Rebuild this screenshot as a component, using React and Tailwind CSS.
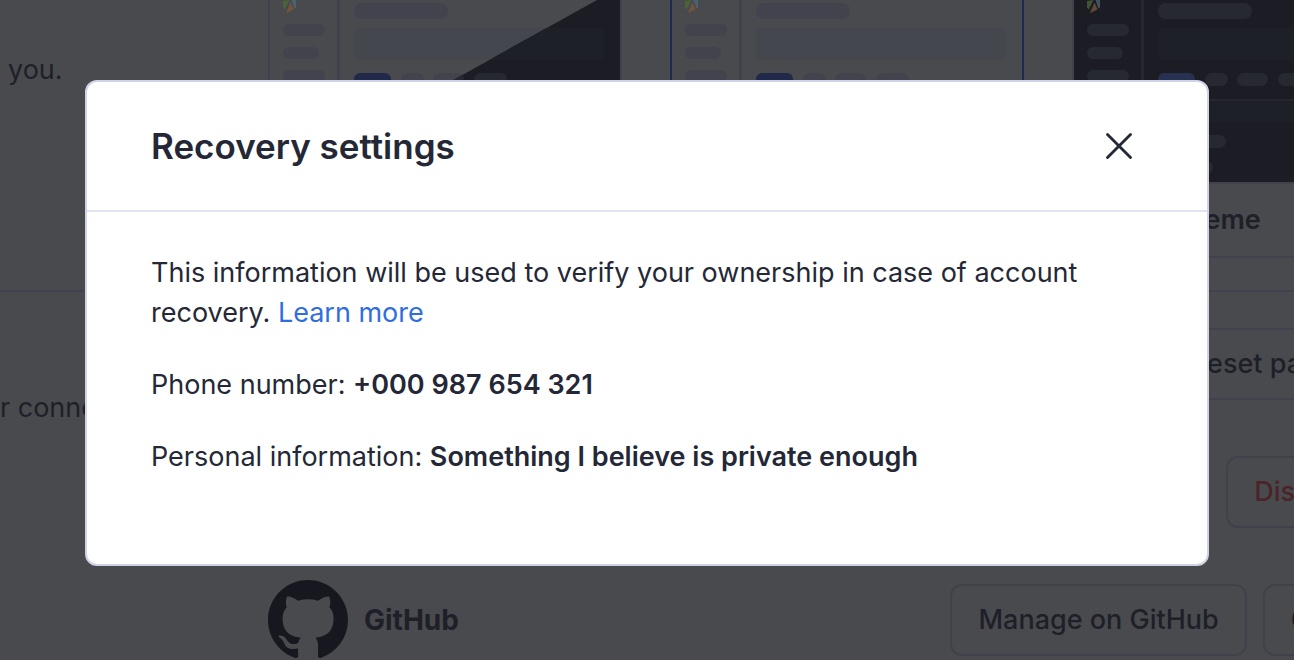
import { X } from "lucide-react";

const palettes = {
  light: { bg: "#494a4d", pill: "#43434d", line: "#42424e", box: "#44474e", blue: "#20294a" },
  dark: { bg: "#1c1c24", pill: "#272931", line: "#26262f", box: "#1d2027", blue: "#273250" },
};

function Mockup({ palette }) {
  const c = palettes[palette];
  return (
    <>
      <rect width="350" height="182" fill={c.bg} />
      <g opacity={palette === "dark" ? 0.8 : 1}>
        <path d="M13 1L19.500 0L14.600 9.500L13 7.500Z" fill="#4a6338" />
        <path d="M20.500 2.500L23.600 9.500L15.800 13.200Z" fill="#75533c" />
        <path d="M21.500 0H26V7.500L24.500 8.500Z" fill="#4a6170" />
      </g>
      <g fill={c.pill}>
        <rect x="13" y="24" width="42" height="12" rx="6" />
        <rect x="13" y="47" width="36" height="12" rx="6" />
        <rect x="13" y="70" width="42" height="12" rx="6" />
        <rect x="84" y="3" width="94" height="16" rx="8" />
        <rect x="131" y="73" width="23" height="13" rx="6.500" />
        <rect x="163" y="73" width="31" height="13" rx="6.500" />
        <rect x="204" y="73" width="33" height="13" rx="6.500" />
        <rect x="84" y="135" width="68" height="13" rx="6.500" />
        <rect x="84" y="161" width="55" height="13" rx="6.500" />
      </g>
      <rect x="67" y="0" width="3" height="182" fill={c.line} />
      <rect x="70" y="99" width="280" height="2" fill={c.line} />
      <rect x="84" y="28" width="250" height="32" rx="4" fill={c.box} />
      <rect x="70" y="101" width="280" height="21" fill={c.box} />
      <rect x="84" y="73" width="37" height="13" rx="6" fill={c.blue} />
    </>
  );
}

function ThemeCard({ label, variant, selected }) {
  return (
    <label
      className={
        "block w-[354px] overflow-hidden border-2 border-t-0 " +
        (selected ? "border-[#202a4e]" : "border-[#42424e]")
      }
    >
      <svg viewBox="0 0 350 182" className="block w-full" aria-hidden="true">
        <defs>
          <clipPath id="diagonal">
            <path d="M327 0H350V182H0Z" />
          </clipPath>
        </defs>
        <Mockup palette={variant === "dark" ? "dark" : "light"} />
        {variant === "system" && (
          <g clipPath="url(#diagonal)">
            <Mockup palette="dark" />
          </g>
        )}
      </svg>
      <span className="flex h-[74px] items-center border-t-2 border-[#42424e] pl-9 font-semibold">
        <input type="radio" name="theme" className="sr-only" defaultChecked={selected} />
        {label}
      </span>
    </label>
  );
}

function PageButton({ children, danger }) {
  return (
    <button
      type="button"
      className={
        "h-18 rounded-xl border-2 border-[#41414c] px-[26px] font-medium whitespace-nowrap " +
        (danger ? "text-[#4b2329]" : "text-[#1e1f29]")
      }
    >
      {children}
    </button>
  );
}

function GitHubMark() {
  return (
    <svg viewBox="0 0 16 16" className="size-20" fill="#17171f" aria-hidden="true">
      <path d="M8 0C3.580 0 0 3.580 0 8c0 3.540 2.290 6.530 5.470 7.590.4.070.55-.17.55-.38 0-.19-.01-.82-.01-1.490-2.010.37-2.530-.49-2.690-.94-.09-.23-.48-.94-.82-1.130-.28-.15-.68-.52-.01-.53.63-.01 1.080.58 1.230.82.72 1.210 1.870.87 2.330.66.07-.52.28-.87.51-1.070-1.780-.2-3.640-.89-3.640-3.950 0-.87.31-1.590.82-2.150-.08-.2-.36-1.020.08-2.120 0 0 .67-.21 2.200.82.64-.18 1.320-.27 2-.27s1.360.09 2 .27c1.530-1.040 2.200-.82 2.200-.82.44 1.100.16 1.920.08 2.120.51.56.82 1.270.82 2.150 0 3.070-1.870 3.750-3.650 3.950.29.25.54.73.54 1.480 0 1.070-.01 1.930-.01 2.200 0 .21.15.46.55.38A8.010 8.010 0 0 0 16 8c0-4.420-3.580-8-8-8Z" />
    </svg>
  );
}

function SettingsPage() {
  return (
    <main className="w-max min-w-full">
      <section className="flex border-b-2 border-[#42424e] pb-8">
        <p className="w-[268px] pt-[50px] pl-2">you.</p>
        <div className="flex gap-12">
          <ThemeCard label="System theme" variant="system" />
          <ThemeCard label="Light theme" variant="light" selected />
          <ThemeCard label="Dark theme" variant="dark" />
        </div>
      </section>
      <section className="flex pt-9">
        <p className="w-[268px] pt-[60px]">r connected</p>
        <div className="flex w-[1160px] flex-col gap-14">
          <div className="flex justify-end border-y-2 border-[#42424e]">
            <button type="button" className="h-[68px] px-8 font-medium">
              Reset password
            </button>
          </div>
          <div className="flex justify-end">
            <PageButton danger>Disconnect</PageButton>
          </div>
          <div className="flex h-18 items-center gap-4">
            <GitHubMark />
            <h3 className="flex-1 text-[28px] font-bold">GitHub</h3>
            <PageButton>Manage on GitHub</PageButton>
            <PageButton>Connect</PageButton>
          </div>
        </div>
      </section>
    </main>
  );
}

function RecoveryDialog() {
  return (
    <div className="fixed inset-0 flex items-start justify-center px-10 pt-20">
      <div
        role="dialog"
        aria-modal="true"
        aria-labelledby="recovery-title"
        className="w-full max-w-[1124px] rounded-xl border-2 border-[#d0d2e8] bg-white text-[#242836]"
      >
        <header className="flex items-center justify-between border-b-2 border-[#e0e3f2] px-16 py-10">
          <h2 id="recovery-title" className="text-[35px] leading-12 font-semibold">
            Recovery settings
          </h2>
          <button type="button" aria-label="Close" className="grid size-12 place-items-center">
            <X className="size-[46px]" strokeWidth={1.5} />
          </button>
        </header>
        <div className="flex flex-col gap-8 px-16 pt-[41px] pb-[87px]">
          <p>
            This information will be used to verify your ownership in case of account recovery.{" "}
            <a href="#learn-more" className="text-[#2f6ee0]">
              Learn more
            </a>
          </p>
          <p>
            Phone number: <strong className="font-semibold">+000 987 654 321</strong>
          </p>
          <p>
            Personal information:{" "}
            <strong className="font-semibold">Something I believe is private enough</strong>
          </p>
        </div>
      </div>
    </div>
  );
}

export default function App() {
  return (
    <div className="h-screen overflow-hidden bg-[#494a4d] font-['Inter',sans-serif] text-[27px] leading-10 text-[#1e1f29]">
      <SettingsPage />
      <RecoveryDialog />
    </div>
  );
}
